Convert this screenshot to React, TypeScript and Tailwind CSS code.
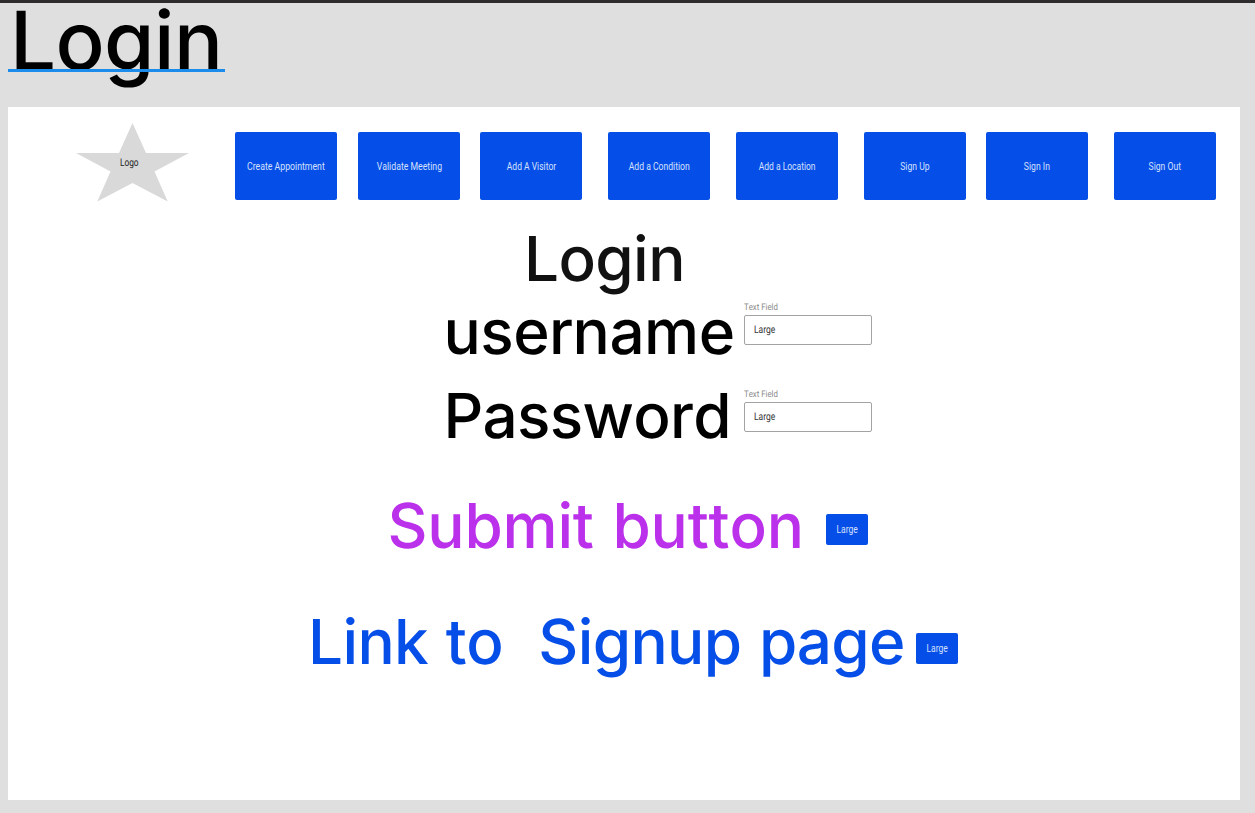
import type { ReactNode } from "react";

const navItems = [
  { label: "Create Appointment", gap: "ml-0", fit: "scale-x-[0.83]" },
  { label: "Validate Meeting", gap: "ml-[20.6px]", fit: "scale-x-[0.83]" },
  { label: "Add A Visitor", gap: "ml-[20.6px]", fit: "scale-x-[0.81]" },
  { label: "Add a Condition", gap: "ml-[25.6px]", fit: "scale-x-[0.82]" },
  { label: "Add a Location", gap: "ml-[25.7px]", fit: "scale-x-[0.81]" },
  { label: "Sign Up", gap: "ml-[25.9px]", fit: "scale-x-[0.82]" },
  { label: "Sign In", gap: "ml-[20.4px]", fit: "scale-x-[0.82]" },
  { label: "Sign Out", gap: "ml-[25.7px]", fit: "scale-x-[0.82]" },
];

const small = "inline-block whitespace-nowrap font-['Roboto',sans-serif] text-[10.5px] leading-[14px]";
const heading = "whitespace-pre font-medium text-[62px] leading-[75px]";

function LargeButton({ className }: { className: string }) {
  return (
    <button className={`flex h-[31px] w-[42.5px] shrink-0 items-center justify-center rounded-[2px] bg-[#064ee8] pt-px text-[#d5e1fb] ${className}`}>
      <span className={`${small} scale-x-[0.81]`}>Large</span>
    </button>
  );
}

function TextField() {
  return (
    <div className="w-[128px] shrink-0">
      <div className="h-[14px]">
        <span className="block origin-left scale-x-[0.87] whitespace-nowrap font-['Roboto',sans-serif] text-[9px] leading-[14px] text-[#8a8a8a]">
          Text Field
        </span>
      </div>
      <div className="flex h-[30.5px] items-center rounded-[2px] border border-[#a3a3a3] pl-[9px]">
        <span className={`${small} origin-left scale-x-[0.81] text-[#333]`}>Large</span>
      </div>
    </div>
  );
}

function Row({ className, children }: { className: string; children: ReactNode }) {
  return <div className={`flex h-[75px] items-start ${className}`}>{children}</div>;
}

export default function App() {
  return (
    <div className="flex h-[813px] w-[1255px] flex-col border-t-[3px] border-[#2e2c2d] bg-[#dfdfdf] font-['Inter',sans-serif] [font-kerning:none] [text-rendering:geometricPrecision]">
      <header className="h-[103.6px] shrink-0 pl-2">
        <h1 className="relative mt-[-3px] h-[100px] w-[218px] whitespace-nowrap pl-[2px] text-[81.5px] font-medium leading-[82px] tracking-[-0.6px] text-black">
          Login
          <span className="absolute left-0 top-[69px] h-[2.5px] w-[216.5px] bg-[#1b8ceb]" />
        </h1>
      </header>
      <main className="ml-2 h-[693px] w-[1232.4px] shrink-0 bg-white">
        <nav className="flex h-[114px] pt-[16px]">
          <div className="relative ml-[68px] h-[79px] w-[113px] shrink-0">
            <svg className="block h-[79px] w-[113px]" viewBox="0 0 113 79">
              <path d="M56.5 0 70 30H113L78.5 48.5 91.7 78.4 56.5 60 21.3 78.4 34.5 48.5 0 30H43Z" fill="#d9d9d9" />
            </svg>
            <span className={`${small} absolute left-[44px] top-[33px] origin-left scale-x-[0.79] text-[#222]`}>Logo</span>
          </div>
          <div className="ml-[46.3px] flex pt-[9.7px]">
            {navItems.map((item) => (
              <button
                key={item.label}
                className={`flex h-[68px] w-[102px] shrink-0 items-center justify-center rounded-[2px] bg-[#064ee8] pt-px text-[#d5e1fb] ${item.gap}`}
              >
                <span className={`${small} ${item.fit}`}>{item.label}</span>
              </button>
            ))}
          </div>
        </nav>
        <Row className="pl-[516px]">
          <h2 className={`${heading} tracking-[-0.6px] text-[#111]`}>Login</h2>
        </Row>
        <Row className="mt-[-2px] pl-[435.5px]">
          <div className={`${heading} w-[300px] tracking-[-0.5px] text-black`}>username</div>
          <div className="pt-[7px]">
            <TextField />
          </div>
        </Row>
        <Row className="mt-[9px] pl-[435.5px]">
          <div className={`${heading} w-[300px] tracking-[-0.7px] text-black`}>Password</div>
          <div className="pt-[10px]">
            <TextField />
          </div>
        </Row>
        <Row className="mt-[35px] pl-[379.5px]">
          <div className={`${heading} w-[438.2px] tracking-[-0.2px] text-[#bb30ea] [word-spacing:2.4px]`}>Submit button</div>
          <LargeButton className="mt-[26px]" />
        </Row>
        <Row className="mt-[41px] pl-[300px]">
          <div className={`${heading} w-[607.7px] tracking-[-0.65px] text-[#064ee8] [word-spacing:1.8px]`}>{"Link to  Signup page"}</div>
          <LargeButton className="mt-[29.5px]" />
        </Row>
      </main>
    </div>
  );
}
